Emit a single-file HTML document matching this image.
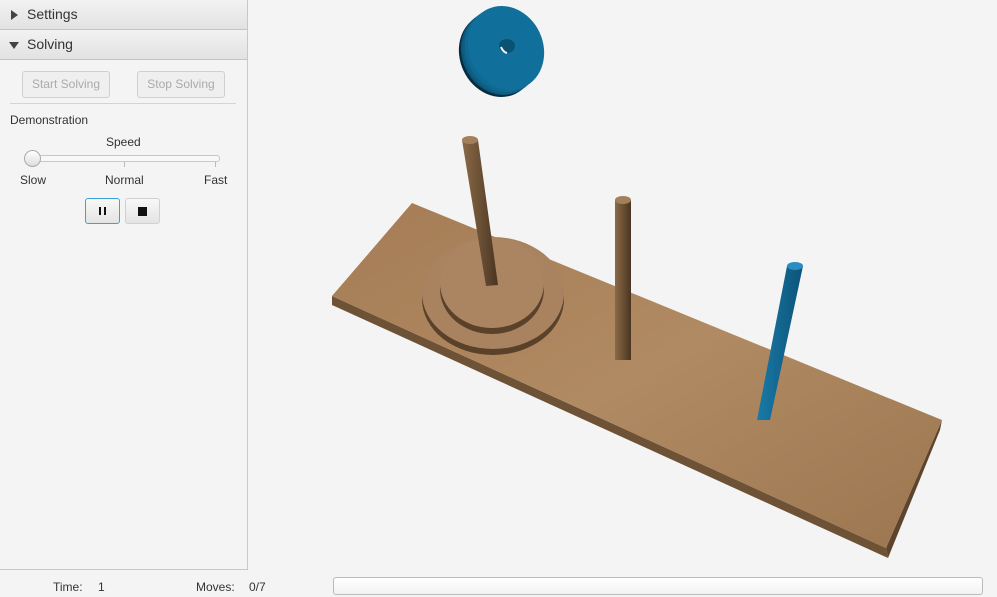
<!DOCTYPE html>
<html><head><meta charset="utf-8"><style>
body{margin:0;width:997px;height:597px;background:#f4f4f4;font-family:"Liberation Sans",sans-serif;overflow:hidden;position:relative}
.left{position:absolute;left:0;top:0;width:247px;height:569px;border-right:1px solid #c8c8c8;border-bottom:1px solid #c8c8c8;background:#f4f4f4}
.hdr{height:29px;border-bottom:1px solid #c4c4c4;background:linear-gradient(#f2f2f2,#e2e2e2);font-size:14px;color:#333;line-height:29px;padding-left:10px;position:relative}
.hdr span.t{position:absolute;left:27px}
.btn{position:absolute;height:25px;border:1px solid #d0d0d0;border-radius:3px;background:#efefef;color:#aaa;font-size:12px;line-height:25px;text-align:center}
.lbl{position:absolute;font-size:12px;color:#333}
</style></head><body>
<div class="left">
 <div class="hdr"><svg width="8" height="10" style="position:absolute;left:11px;top:10px"><path d="M0 0L7 5L0 10Z" fill="#444"/></svg><span class="t">Settings</span></div>
 <div class="hdr"><svg width="10" height="8" style="position:absolute;left:9px;top:12px"><path d="M0 0L10 0L5 7Z" fill="#444"/></svg><span class="t">Solving</span></div>
 <div class="btn" style="left:22px;top:71px;width:86px">Start Solving</div>
 <div class="btn" style="left:137px;top:71px;width:86px">Stop Solving</div>
 <div style="position:absolute;left:10px;top:103px;width:226px;height:1px;background:#d4d4d4"></div>
 <div class="lbl" style="left:10px;top:113px">Demonstration</div>
 <div class="lbl" style="left:106px;top:135px">Speed</div>
 <div style="position:absolute;left:26px;top:155px;width:192px;height:5px;border:1px solid #c8c8c8;border-radius:3px;background:#f8f8f8"></div>
 <div style="position:absolute;left:24px;top:150px;width:15px;height:15px;border:1px solid #aaa;border-radius:50%;background:linear-gradient(#fff,#ddd)"></div>
 <div style="position:absolute;left:124px;top:162px;width:1px;height:5px;background:#bbb"></div>
 <div style="position:absolute;left:215px;top:162px;width:1px;height:5px;background:#bbb"></div>
 <div class="lbl" style="left:20px;top:173px">Slow</div>
 <div class="lbl" style="left:105px;top:173px">Normal</div>
 <div class="lbl" style="left:204px;top:173px">Fast</div>
 <div class="btn" style="left:85px;top:198px;width:33px;height:24px;border-color:#3ba3d8;background:linear-gradient(#f8f8f8,#e4e4e4)"><span style="position:absolute;left:13px;top:8px;width:2px;height:8px;background:#111"></span><span style="position:absolute;left:18px;top:8px;width:2px;height:8px;background:#111"></span></div>
 <div class="btn" style="left:125px;top:198px;width:33px;height:24px;background:linear-gradient(#f8f8f8,#e4e4e4)"><span style="position:absolute;left:12px;top:8px;width:9px;height:9px;background:#111"></span></div>
</div>
<div class="lbl" style="left:53px;top:580px">Time:</div>
<div class="lbl" style="left:98px;top:580px">1</div>
<div class="lbl" style="left:196px;top:580px">Moves:</div>
<div class="lbl" style="left:249px;top:580px">0/7</div>
<div style="position:absolute;left:333px;top:577px;width:648px;height:16px;border:1px solid #bbb;border-radius:3px;background:linear-gradient(#fff,#f2f2f2)"></div>
<svg width="997" height="597" style="position:absolute;left:0;top:0">
 <defs>
  <linearGradient id="wood" x1="0" y1="0" x2="1" y2="1"><stop offset="0" stop-color="#a57c55"/><stop offset=".5" stop-color="#b08a62"/><stop offset="1" stop-color="#9c7650"/></linearGradient>
  <linearGradient id="peg" x1="0" x2="1"><stop offset="0" stop-color="#8a6a48"/><stop offset=".5" stop-color="#6b5034"/><stop offset="1" stop-color="#4a3522"/></linearGradient>
  <linearGradient id="bpeg" x1="0" x2="1"><stop offset="0" stop-color="#1a7aa8"/><stop offset="1" stop-color="#0c5378"/></linearGradient>
 </defs>
 <path d="M332 296L886 548L888 558L332 305Z" fill="#6e5236"/>
 <path d="M886 548L942 420L940 430L888 558Z" fill="#5e442c"/>
 <path d="M412 203L942 420L886 548L332 296Z" fill="url(#wood)"/>
 <ellipse cx="493" cy="299" rx="71" ry="56" fill="#5a4129"/>
 <ellipse cx="493" cy="293" rx="71" ry="56" fill="#a98260"/>
 <ellipse cx="492" cy="289" rx="52" ry="45" fill="#5a4129"/>
 <ellipse cx="492" cy="283" rx="52" ry="45" fill="#ab8562"/>
 <path d="M462 140L478 140L498 285L486 286Z" fill="url(#peg)"/>
 <ellipse cx="470" cy="140" rx="8" ry="4" fill="#a2805c"/>
 <rect x="615" y="200" width="16" height="160" fill="url(#peg)"/>
 <ellipse cx="623" cy="200" rx="8" ry="4" fill="#a2805c"/>
 <path d="M787 266L803 266L770 420L757 420Z" fill="url(#bpeg)"/>
 <ellipse cx="795" cy="266" rx="8" ry="4" fill="#2a8cc0"/>
 <ellipse cx="497" cy="55" rx="37" ry="43" transform="rotate(-25 497 55)" fill="#062c40"/>
 <ellipse cx="499" cy="53" rx="37" ry="43" transform="rotate(-25 499 53)" fill="#0b5678"/>
 <ellipse cx="501" cy="52" rx="37" ry="43" transform="rotate(-25 501 52)" fill="#0d6088"/>
 <ellipse cx="503" cy="50" rx="37" ry="43" transform="rotate(-25 503 50)" fill="#0f6990"/>
 <ellipse cx="506" cy="48" rx="37" ry="43" transform="rotate(-25 506 48)" fill="#10709b"/>
 <ellipse cx="507" cy="46" rx="8" ry="7" fill="#0a5272"/>
 <path d="M501 47Q503 52 507 53" stroke="#f0f4f6" stroke-width="2" fill="none"/>
</svg>
</body></html>
